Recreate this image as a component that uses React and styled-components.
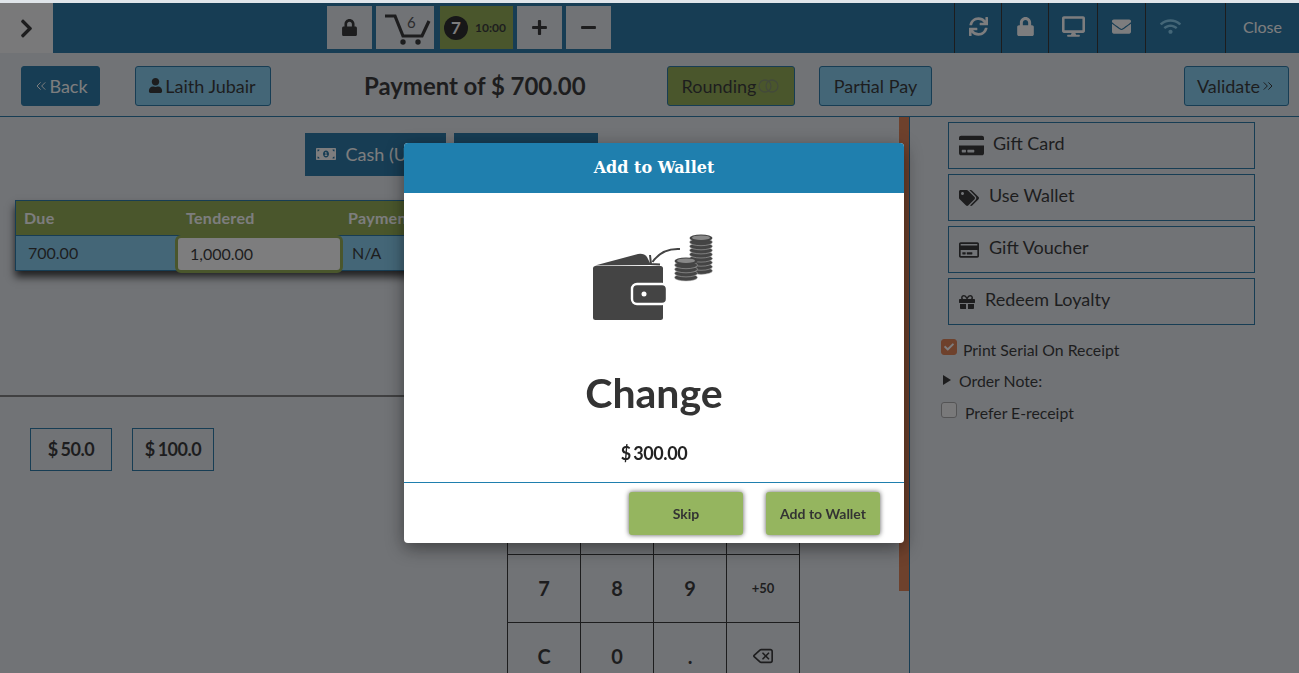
import React from 'react';
import styled, {createGlobalStyle} from 'styled-components';
import {
    FaChevronRight, FaLock, FaPlus, FaMinus, FaSync, FaDesktop, FaEnvelope, FaWifi, FaUser,
    FaCreditCard, FaRegCreditCard, FaTags, FaGift, FaMoneyBillAlt, FaCheck,
} from 'react-icons/fa';
import {ChevronsLeft, ChevronsRight, Delete} from 'lucide-react';

const BAR = '#005f96';
const LIGHT = '#70c6ee';
const OLIVE = '#7f9f33';
const PAGE = '#e0e5ea';

const GlobalStyle = createGlobalStyle`
html, body {
    margin: 0;
    height: 100%;
    overflow: hidden;
    background: #fff;
}
* {
    box-sizing: border-box;
}
#root {
    height: 100%;
    font-family: Lato, "Liberation Sans", sans-serif;
    color: #111;
}
`;

const Page = styled.div`
height: 673px;
padding-top: 3px;
display: flex;
flex-direction: column;
background: ${PAGE};
overflow: hidden;
`;

const TopBar = styled.div`
height: 50px;
flex: none;
display: flex;
background: ${BAR};
`;

const MenuCell = styled.div`
width: 53px;
display: flex;
align-items: center;
justify-content: center;
background: #f4f4f4;
font-size: 21px;
color: #111;
`;

const TopGroup = styled.div`
display: flex;
gap: 4px;
margin-left: 274px;
padding-top: 3px;
`;

const TopBtn = styled.div`
width: ${p => p.$w || 45}px;
height: 43px;
margin-right: ${p => p.$mr || 0}px;
display: flex;
align-items: center;
justify-content: center;
background: ${PAGE};
font-size: 17px;
color: #111;
`;

const TimerBtn = styled(TopBtn)`
background: ${OLIVE};
justify-content: flex-start;
gap: 7px;
padding-left: 4px;
font-size: 12px;
font-weight: 700;
`;

const TimerCount = styled.span`
width: 24px;
height: 24px;
border-radius: 50%;
background: #000;
color: #fff;
display: flex;
align-items: center;
justify-content: center;
font-size: 17px;
`;

const StatusGroup = styled.div`
margin-left: auto;
display: flex;
`;

const StatusCell = styled.div`
width: ${p => p.$w}px;
display: flex;
align-items: center;
justify-content: ${p => p.$left ? 'flex-start' : 'center'};
padding-left: ${p => p.$left ? 14 : 0}px;
padding-bottom: 4px;
border-left: 1px solid #111;
color: ${p => p.$dim ? LIGHT : '#fff'};
font-size: ${p => p.$size || 19}px;
`;

const ActionBar = styled.div`
height: 64px;
flex: none;
display: flex;
align-items: center;
padding: 2px 10px 0 21px;
border-bottom: 1px solid ${BAR};
`;

const ActionBtn = styled.div`
height: 40px;
width: ${p => p.$w}px;
flex: none;
margin-left: ${p => p.$ml || 0}px;
display: flex;
align-items: center;
justify-content: center;
gap: ${p => p.$gap || 0}px;
padding-right: ${p => p.$pr || 0}px;
border: 1px solid ${BAR};
border-radius: 3px;
background: ${p => p.$bg || LIGHT};
color: ${p => p.$light ? '#fff' : '#111'};
font-size: 18px;
`;

const PayTitle = styled.div`
margin-left: 93px;
width: 222px;
flex: none;
white-space: nowrap;
font-size: 24px;
font-weight: 700;
letter-spacing: -0.05px;
`;

const Body = styled.div`
flex: 1;
display: flex;
min-height: 0;
`;

const MainCol = styled.div`
width: 899px;
display: flex;
flex-direction: column;
`;

const UpperPane = styled.div`
height: 280px;
flex: none;
padding-top: 16px;
border-bottom: 2px solid #666;
`;

const TabRow = styled.div`
display: flex;
justify-content: center;
gap: 8px;
padding-left: 3px;
`;

const PayTab = styled.div`
width: ${p => p.$w}px;
height: 43px;
display: flex;
align-items: center;
gap: 10px;
padding: 0 0 2px 11px;
background: ${BAR};
color: #fff;
font-size: 18px;
white-space: nowrap;
overflow: hidden;
`;

const PayTable = styled.div`
width: 650px;
margin: 24px 0 0 15px;
border: 1px solid ${BAR};
box-shadow: 0 6px 8px rgba(0, 0, 0, 0.9);
`;

const HeadRow = styled.div`
height: 34px;
display: grid;
grid-template-columns: 162px 162px 1fr;
align-items: center;
padding-bottom: 2px;
background: ${OLIVE};
color: #fff;
font-size: 16px;
font-weight: 700;
letter-spacing: 0.3px;
`;

const HeadCell = styled.div`
padding-left: 8px;
`;

const ValueRow = styled.div`
height: 35px;
display: grid;
grid-template-columns: 162px 162px 1fr;
align-items: center;
background: ${LIGHT};
border-top: 1px solid ${BAR};
font-size: 16px;
padding-bottom: 3px;
`;

const ValueCell = styled.div`
padding-left: 12px;
`;

const TenderInput = styled.div`
height: 38px;
margin: -1px -3px -4px;
display: flex;
align-items: center;
padding: 0 0 2px 12px;
background: #fff;
border: 3px solid ${OLIVE};
border-radius: 6px;
`;

const LowerPane = styled.div`
flex: 1;
display: flex;
min-height: 0;
`;

const QuickRow = styled.div`
width: 507px;
flex: none;
display: flex;
gap: 20px;
padding: 31px 0 0 30px;
`;

const QuickBtn = styled.div`
width: 82px;
height: 43px;
display: flex;
align-items: center;
justify-content: center;
padding-bottom: 2px;
border: 1px solid ${BAR};
font-size: 18px;
font-weight: 700;
letter-spacing: -0.5px;
word-spacing: -1px;
`;

const Keypad = styled.div`
margin-top: 21px;
width: 293px;
display: grid;
grid-template-columns: repeat(4, 73px);
grid-auto-rows: 68px;
border-left: 1px solid #111;
border-top: 1px solid #111;
`;

const Key = styled.div`
display: flex;
align-items: center;
justify-content: center;
padding-bottom: 2px;
border-right: 1px solid #111;
border-bottom: 1px solid #111;
font-size: ${p => p.$small ? 13 : 20}px;
font-weight: 700;
`;

const ScrollTrack = styled.div`
width: 11px;
flex: none;
border-right: 1px solid ${BAR};
`;

const ScrollThumb = styled.div`
width: 10px;
height: 474px;
background: #da6934;
`;

const SideCol = styled.div`
flex: 1;
padding: 5px 0 0 31px;
`;

const SideBtn = styled.div`
width: 307px;
height: 47px;
margin: 0 0 5px 7px;
display: flex;
align-items: center;
gap: ${p => p.$gap}px;
padding: 0 0 6px 10px;
border: 1px solid ${BAR};
font-size: 18px;
`;

const SideIcon = styled.span`
display: flex;
font-size: ${p => p.$size}px;
margin-top: 6px;
`;

const OptionsBox = styled.div`
margin-top: 8px;
`;

const OptionRow = styled.div`
display: flex;
align-items: center;
height: ${p => p.$h}px;
gap: ${p => p.$gap}px;
font-size: 15.8px;
`;

const CheckMark = styled.span`
width: 16px;
height: 16px;
margin-top: -5px;
display: flex;
align-items: center;
justify-content: center;
border-radius: 3px;
border: 1px solid ${p => p.$on ? '#da6934' : '#999'};
background: ${p => p.$on ? '#da6934' : '#f4f4f4'};
color: #fff;
font-size: 10px;
`;

const NoteCaret = styled.span`
width: 0;
height: 0;
margin: -2px 0 0 2px;
border-left: 8px solid #111;
border-top: 5px solid transparent;
border-bottom: 5px solid transparent;
`;

const Overlay = styled.div`
position: fixed;
left: 0;
right: 0;
top: 3px;
bottom: 0;
padding: 140px 0 0 404px;
background: rgba(38, 38, 40, 0.6);
`;

const Modal = styled.div`
width: 500px;
height: 400px;
display: flex;
flex-direction: column;
background: #fff;
border-radius: 4px;
overflow: hidden;
box-shadow: 0 5px 18px rgba(0, 0, 0, 0.45);
`;

const ModalHead = styled.div`
height: 50px;
flex: none;
display: flex;
align-items: center;
justify-content: center;
padding-bottom: 2px;
background: #1f7fae;
color: #fff;
font-family: "DejaVu Serif", "Liberation Serif", serif;
font-size: 16px;
font-weight: 700;
`;

const ModalBody = styled.div`
flex: 1;
display: flex;
flex-direction: column;
align-items: center;
padding-top: 32px;
color: #333;
`;

const WalletBox = styled.div`
height: 105px;
margin-right: 3px;
`;

const ChangeTitle = styled.div`
margin-top: 39px;
font-size: 41px;
line-height: 48px;
font-weight: 700;
`;

const ChangeAmount = styled.div`
margin-top: 25px;
font-size: 18px;
line-height: 22px;
font-weight: 700;
letter-spacing: -0.4px;
word-spacing: -1.5px;
color: #222;
`;

const ModalFoot = styled.div`
height: 61px;
flex: none;
display: flex;
justify-content: flex-end;
gap: 23px;
padding: 9px 24px 0 0;
border-top: 1px solid #1f7fae;
`;

const ModalBtn = styled.div`
width: 114px;
height: 43px;
display: flex;
align-items: center;
justify-content: center;
background: #95b55f;
border-radius: 3px;
box-shadow: 0 0 5px rgba(0, 0, 0, 0.65);
color: #333;
font-size: 14px;
font-weight: 700;
`;

const CartIcon = () => (
    <svg width="58" height="43" viewBox="0 0 58 43">
        <path d="M9 10 H19 L27 30 H46 L53 15" fill="none" stroke="#111" strokeWidth="3.2"/>
        <circle cx="27" cy="36" r="2.7" fill="#111"/>
        <circle cx="42" cy="36" r="2.7" fill="#111"/>
        <text x="31" y="22" fontSize="15" fill="#333" fontFamily="Lato, sans-serif">6</text>
    </svg>
);

const RingsIcon = () => (
    <svg width="22" height="14" viewBox="0 0 22 14">
        <circle cx="7" cy="7" r="6" fill="none" stroke="#6f7f55" strokeWidth="1.3"/>
        <circle cx="14" cy="7" r="6" fill="none" stroke="#6f7f55" strokeWidth="1.3"/>
    </svg>
);

// one pile of coins, drawn from the bottom up
const CoinStack = ({x, y, count}) => (
    <g>
        {Array.from({length: count}).map((_, i) => (
            <ellipse key={i} cx={x} cy={y + (count - i) * 4.1} rx="11.5" ry="3.6" fill="#444" stroke="#bbb" strokeWidth="0.5"/>
        ))}
        <ellipse cx={x} cy={y} rx="11.5" ry="3.6" fill="#444"/>
        <ellipse cx={x} cy={y - 0.3} rx="9" ry="2.3" fill="#888"/>
    </g>
);

const WalletIcon = () => (
    <svg width="145" height="105" viewBox="0 0 145 105">
        <path d="M15 40.5 L58 29 Q64 28 67 32 L71 40 Z" fill="#444"/>
        <rect x="13" y="41" width="70" height="54" rx="2.5" fill="#444"/>
        <rect x="52" y="59" width="35" height="20" rx="5" fill="#444" stroke="#fff" strokeWidth="2.4"/>
        <circle cx="64" cy="69" r="2.5" fill="#fff"/>
        <path d="M100 24 Q82 23 72.5 37" fill="none" stroke="#444" strokeWidth="2"/>
        <path d="M70 30 L71 39 L80 39.5" fill="none" stroke="#444" strokeWidth="2"/>
        <CoinStack x={121} y={13} count={8}/>
        <CoinStack x={106} y={36} count={4}/>
    </svg>
);

const KEYS = ['1', '2', '3', '+10', '4', '5', '6', '+20', '7', '8', '9', '+50', 'C', '0', '.'];

class App extends React.Component {

    render() {
        return (
            <Page>
                <GlobalStyle/>
                <TopBar>
                    <MenuCell><FaChevronRight/></MenuCell>
                    <TopGroup>
                        <TopBtn><FaLock/></TopBtn>
                        <TopBtn $w={58} $mr={2}><CartIcon/></TopBtn>
                        <TimerBtn $w={73}><TimerCount>7</TimerCount>10:00</TimerBtn>
                        <TopBtn><FaPlus/></TopBtn>
                        <TopBtn><FaMinus/></TopBtn>
                    </TopGroup>
                    <StatusGroup>
                        <StatusCell $w={47}><FaSync/></StatusCell>
                        <StatusCell $w={47}><FaLock/></StatusCell>
                        <StatusCell $w={49}><FaDesktop size={23}/></StatusCell>
                        <StatusCell $w={48}><FaEnvelope/></StatusCell>
                        <StatusCell $w={80} $left $dim><FaWifi size={21}/></StatusCell>
                        <StatusCell $w={74} $size={16}>Close</StatusCell>
                    </StatusGroup>
                </TopBar>
                <ActionBar>
                    <ActionBtn $w={79} $bg={BAR} $light><ChevronsLeft size={16} strokeWidth={1.5}/>Back</ActionBtn>
                    <ActionBtn $w={136} $ml={35} $gap={2} $pr={2}><FaUser size={15}/>Laith Jubair</ActionBtn>
                    <PayTitle>Payment of $ 700.00</PayTitle>
                    <ActionBtn $w={128} $ml={81} $bg={OLIVE} $gap={2}>Rounding<RingsIcon/></ActionBtn>
                    <ActionBtn $w={113} $ml={24}>Partial Pay</ActionBtn>
                    <ActionBtn $w={105} $ml={252}>Validate<ChevronsRight size={16} strokeWidth={1.5}/></ActionBtn>
                </ActionBar>
                <Body>
                    <MainCol>
                        <UpperPane>
                            <TabRow>
                                <PayTab $w={141}><FaMoneyBillAlt size={20}/>Cash (USD)</PayTab>
                                <PayTab $w={144}>Card</PayTab>
                            </TabRow>
                            <PayTable>
                                <HeadRow>
                                    <HeadCell>Due</HeadCell>
                                    <HeadCell>Tendered</HeadCell>
                                    <HeadCell>Payment</HeadCell>
                                </HeadRow>
                                <ValueRow>
                                    <ValueCell>700.00</ValueCell>
                                    <TenderInput>1,000.00</TenderInput>
                                    <ValueCell>N/A</ValueCell>
                                </ValueRow>
                            </PayTable>
                        </UpperPane>
                        <LowerPane>
                            <QuickRow>
                                <QuickBtn>$ 50.0</QuickBtn>
                                <QuickBtn>$ 100.0</QuickBtn>
                            </QuickRow>
                            <Keypad>
                                {KEYS.map(k => <Key key={k} $small={k[0] === '+'}>{k}</Key>)}
                                <Key $small><Delete size={22} strokeWidth={1.8}/></Key>
                            </Keypad>
                        </LowerPane>
                    </MainCol>
                    <ScrollTrack><ScrollThumb/></ScrollTrack>
                    <SideCol>
                        <SideBtn $gap={9}><SideIcon $size={25}><FaCreditCard/></SideIcon>Gift Card</SideBtn>
                        <SideBtn $gap={10}><SideIcon $size={20}><FaTags/></SideIcon>Use Wallet</SideBtn>
                        <SideBtn $gap={10}><SideIcon $size={20}><FaRegCreditCard/></SideIcon>Gift Voucher</SideBtn>
                        <SideBtn $gap={10}><SideIcon $size={16}><FaGift/></SideIcon>Redeem Loyalty</SideBtn>
                        <OptionsBox>
                            <OptionRow $h={32} $gap={6}><CheckMark $on><FaCheck/></CheckMark>Print Serial On Receipt</OptionRow>
                            <OptionRow $h={31} $gap={8}><NoteCaret/>Order Note:</OptionRow>
                            <OptionRow $h={33} $gap={8}><CheckMark/>Prefer E-receipt</OptionRow>
                        </OptionsBox>
                    </SideCol>
                </Body>
                <Overlay>
                    <Modal>
                        <ModalHead>Add to Wallet</ModalHead>
                        <ModalBody>
                            <WalletBox><WalletIcon/></WalletBox>
                            <ChangeTitle>Change</ChangeTitle>
                            <ChangeAmount>$ 300.00</ChangeAmount>
                        </ModalBody>
                        <ModalFoot>
                            <ModalBtn>Skip</ModalBtn>
                            <ModalBtn>Add to Wallet</ModalBtn>
                        </ModalFoot>
                    </Modal>
                </Overlay>
            </Page>
        )
    }
}

export default App;
